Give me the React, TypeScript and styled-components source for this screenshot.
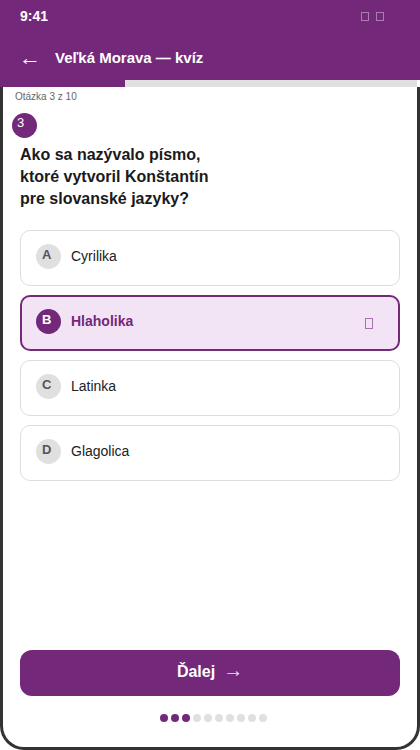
import React from "react";
import styled, { createGlobalStyle } from "styled-components";

const PURPLE = "#74287a";

const Global = createGlobalStyle`
  html, body { margin: 0; padding: 0; background: #fff; }
  body { font-family: "Liberation Sans", Arial, sans-serif; }
  * { box-sizing: border-box; }
`;

const Phone = styled.div`
  width: 420px;
  height: 750px;
  display: flex;
  flex-direction: column;
  overflow: hidden;
`;

const StatusBar = styled.div`
  height: 40px;
  background: ${PURPLE};
  display: flex;
  align-items: flex-start;
  justify-content: space-between;
  padding: 8px 36px 0 20px;
  color: #fff;
  font-weight: bold;
  font-size: 14px;
`;

const StatusIcons = styled.div`
  display: flex;
  gap: 7px;
  padding-top: 4px;
`;

const Tofu = styled.span<{ $color: string; $h?: number }>`
  display: inline-block;
  width: 8px;
  height: ${(p) => p.$h ?? 9}px;
  border: 1px solid ${(p) => p.$color};
`;

const Header = styled.div`
  height: 40px;
  background: ${PURPLE};
  display: flex;
  align-items: center;
  padding: 0 0 6px 19px;
  gap: 14px;
  color: #fff;
`;

const Back = styled.span`
  font-size: 22px;
  line-height: 1;
  padding-top: 2px;
`;

const Title = styled.h1`
  margin: 0;
  font-size: 15px;
  font-weight: bold;
`;

const Progress = styled.div`
  height: 7px;
  background: #e0e0e0;
  margin-right: 3px;
`;

const ProgressFill = styled.div`
  height: 100%;
  background: ${PURPLE};
`;

const Body = styled.div`
  flex: 1;
  display: flex;
  flex-direction: column;
  border: 3px solid #333;
  border-top: none;
  border-radius: 0 0 24px 24px;
  padding: 0 17px 0 17px;
`;

const Counter = styled.div`
  font-size: 10px;
  color: #666;
  margin: 4px 0 0 -5px;
`;

const Badge = styled.div`
  width: 25px;
  height: 25px;
  border-radius: 50%;
  background: ${PURPLE};
  color: #fff;
  font-size: 13px;
  line-height: 15px;
  padding-left: 5px;
  padding-top: 2px;
  margin: 11px 0 0 -8px;
`;

const Question = styled.h2`
  margin: 6px 0 0 0;
  font-size: 16px;
  line-height: 22px;
  font-weight: bold;
  color: #1a1a1a;
`;

const Options = styled.div`
  display: flex;
  flex-direction: column;
  gap: 9px;
  margin-top: 20px;
`;

const Option = styled.div<{ $selected?: boolean }>`
  height: 56px;
  border-radius: 10px;
  border: ${(p) => (p.$selected ? `2px solid ${PURPLE}` : "1px solid #ddd")};
  background: ${(p) => (p.$selected ? "#f3e4f5" : "#fff")};
  display: flex;
  align-items: center;
  padding: 0 ${(p) => (p.$selected ? "25px" : "26px")} 0 ${(p) => (p.$selected ? "14px" : "15px")};
  gap: 10px;
`;

const Letter = styled.span<{ $selected?: boolean }>`
  width: 25px;
  height: 25px;
  border-radius: 50%;
  flex-shrink: 0;
  background: ${(p) => (p.$selected ? PURPLE : "#e0e0e0")};
  color: ${(p) => (p.$selected ? "#fff" : "#555")};
  font-size: 13px;
  font-weight: bold;
  line-height: 15px;
  padding: 3px 0 0 6px;
  margin-top: -3px;
`;

const Label = styled.span<{ $selected?: boolean }>`
  flex: 1;
  font-size: 14px;
  color: ${(p) => (p.$selected ? PURPLE : "#222")};
  font-weight: ${(p) => (p.$selected ? "bold" : "normal")};
  margin-top: -4px;
`;

const Spacer = styled.div`
  flex: 1;
`;

const NextButton = styled.button`
  height: 46px;
  border: none;
  border-radius: 12px;
  background: ${PURPLE};
  color: #fff;
  font-family: "Liberation Sans", Arial, sans-serif;
  font-size: 16px;
  font-weight: bold;
  display: flex;
  align-items: center;
  justify-content: center;
  gap: 8px;
  padding: 0 0 2px 0;
`;

const Arrow = styled.span`
  font-weight: normal;
  font-size: 20px;
  line-height: 1;
  margin-top: -5px;
  opacity: 0.85;
`;

const Dots = styled.div`
  display: flex;
  justify-content: center;
  gap: 3px;
  margin: 18px 0 0 7px;
  height: 33px;
`;

const Dot = styled.span<{ $on?: boolean }>`
  width: 8px;
  height: 8px;
  border-radius: 50%;
  background: ${(p) => (p.$on ? PURPLE : "#e0e0e0")};
`;

const options = [
  { k: "A", t: "Cyrilika" },
  { k: "B", t: "Hlaholika", sel: true },
  { k: "C", t: "Latinka" },
  { k: "D", t: "Glagolica" },
];

export default function App() {
  return (
    <Phone>
      <Global />
      <StatusBar>
        <span>9:41</span>
        <StatusIcons>
          <Tofu $color="rgba(255,255,255,0.4)" />
          <Tofu $color="rgba(255,255,255,0.4)" />
        </StatusIcons>
      </StatusBar>
      <Header>
        <Back>←</Back>
        <Title>Veľká Morava — kvíz</Title>
      </Header>
      <Progress>
        <ProgressFill style={{ width: `${(3 / 10) * 100}%` }} />
      </Progress>
      <Body>
        <Counter>Otázka 3 z 10</Counter>
        <Badge>3</Badge>
        <Question>
          Ako sa nazývalo písmo,
          <br />
          ktoré vytvoril Konštantín
          <br />
          pre slovanské jazyky?
        </Question>
        <Options>
          {options.map((o) => (
            <Option key={o.k} $selected={o.sel}>
              <Letter $selected={o.sel}>{o.k}</Letter>
              <Label $selected={o.sel}>{o.t}</Label>
              {o.sel && <Tofu $color={PURPLE} $h={11} style={{ opacity: 0.6 }} />}
            </Option>
          ))}
        </Options>
        <Spacer />
        <NextButton>
          Ďalej<Arrow>→</Arrow>
        </NextButton>
        <Dots>
          {Array.from({ length: 10 }).map((_, i) => (
            <Dot key={i} $on={i < 3} />
          ))}
        </Dots>
      </Body>
    </Phone>
  );
}
